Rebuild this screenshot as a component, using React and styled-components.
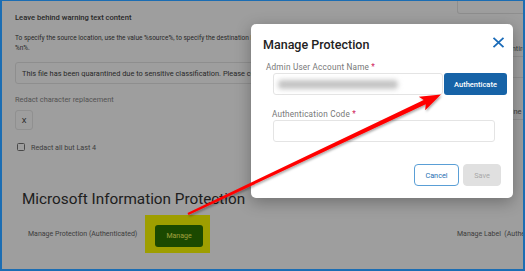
import styled, { createGlobalStyle } from "styled-components";

const GlobalStyle = createGlobalStyle`
  body {
    margin: 0;
    font-family: Roboto, "Liberation Sans", Arial, sans-serif;
  }
`;

const Frame = styled.div`
  position: relative;
  width: 525px;
  height: 271px;
  overflow: hidden;
  background: #fff;
  &::after {
    content: "";
    position: absolute;
    inset: 0;
    border: 2px solid #1b6db3;
    border-top-width: 1px;
    pointer-events: none;
    z-index: 5;
  }
`;

const Page = styled.div`
  padding-left: 15px;
  color: #444;
`;

const TopGrid = styled.div`
  display: grid;
  grid-template-columns: 430px 1fr;
  column-gap: 12px;
`;

const LeftCol = styled.div`
  padding-top: 12px;
  display: flex;
  flex-direction: column;
  align-items: flex-start;
`;

const SectionLabel = styled.div`
  font-size: 7.6px;
  font-weight: 500;
  line-height: 12px;
  color: #444;
`;

const Hint = styled.div`
  margin-top: 9px;
  font-size: 6.5px;
  line-height: 10px;
  color: #444;
  white-space: nowrap;
`;

const TextBox = styled.div`
  margin-top: 9px;
  width: 100%;
  height: 22px;
  box-sizing: border-box;
  border: 1px solid #e6e6e6;
  border-radius: 3px;
  padding-left: 6px;
  display: flex;
  align-items: center;
  font-size: 7.4px;
  color: #444;
  white-space: nowrap;
  overflow: hidden;
`;

const FieldCaption = styled.div`
  margin-top: 10px;
  font-size: 7.4px;
  line-height: 11px;
  color: #888;
`;

const CharBox = styled.div`
  margin-top: 5px;
  width: 18px;
  height: 20px;
  box-sizing: border-box;
  border: 1px solid #e8e8e8;
  border-radius: 3px;
  display: flex;
  align-items: center;
  justify-content: center;
  font-size: 7.5px;
  color: #333;
`;

const CheckRow = styled.label`
  margin-top: 12px;
  height: 10px;
  display: flex;
  align-items: center;
  gap: 6px;
  padding-left: 2px;
  font-size: 7.2px;
  color: #666;
`;

const CheckSquare = styled.span`
  width: 8px;
  height: 8px;
  box-sizing: border-box;
  border: 1px solid #777;
  border-radius: 1.5px;
`;

const RightCol = styled.div`
  display: flex;
  flex-direction: column;
`;

const RightBox = styled.div`
  height: 14px;
  box-sizing: border-box;
  border: 1px solid #e6e6e6;
  border-top: none;
  border-radius: 0 0 3px 3px;
  margin-bottom: 22px;
`;

const RightItem = styled.div`
  height: ${(p) => p.$h}px;
  box-sizing: border-box;
  border-bottom: 1px solid #e8e8e8;
  display: flex;
  align-items: flex-end;
  padding-bottom: 2px;
  font-size: 7.5px;
  line-height: 10px;
  color: #666;
  white-space: nowrap;
`;

const Heading = styled.h2`
  margin: 37px 0 0 7px;
  font-size: 15.3px;
  font-weight: 400;
  line-height: 20px;
  color: #333;
`;

const BottomGrid = styled.div`
  margin-top: 6px;
  display: grid;
  grid-template-columns: 442px 1fr;
`;

const ManageCell = styled.div`
  display: flex;
  align-items: center;
  padding-left: 13px;
`;

const RowLabel = styled.span`
  width: 117px;
  font-size: 7px;
  color: #666;
  white-space: nowrap;
`;

const Highlight = styled.div`
  padding: 8px 7px 6px 10px;
  background: #ffff00;
`;

const ManageButton = styled.button`
  width: 48px;
  height: 22px;
  border: none;
  border-radius: 3px;
  background: #2c7600;
  color: #ffff66;
  font-family: inherit;
  font-size: 7px;
  padding: 0;
`;

const SideCell = styled.div`
  display: flex;
  align-items: center;
  font-size: 7px;
  color: #666;
  white-space: nowrap;
`;

const Backdrop = styled.div`
  position: absolute;
  inset: 0;
  background: rgba(0, 0, 0, 0.38);
`;

const Dialog = styled.div`
  position: absolute;
  left: 251px;
  top: 24px;
  width: 262px;
  height: 174px;
  background: #fff;
  border-radius: 5px;
  box-shadow: 0 4px 16px rgba(0, 0, 0, 0.3);
  display: flex;
  flex-direction: column;
`;

const DialogHeader = styled.div`
  padding: 13px 8px 0 12px;
  display: flex;
  justify-content: space-between;
  align-items: flex-start;
`;

const DialogTitle = styled.h3`
  margin: 0;
  font-size: 12.5px;
  font-weight: 500;
  line-height: 16px;
  color: #222;
`;

const CloseButton = styled.button`
  border: none;
  background: none;
  padding: 0;
  width: 13px;
  height: 11px;
  display: flex;
`;

const DialogBody = styled.div`
  padding: 0 6px 0 22px;
  display: flex;
  flex-direction: column;
  align-items: flex-start;
`;

const FieldLabel = styled.div`
  margin: ${(p) => p.$top}px 0 1px ${(p) => p.$shift}px;
  font-size: 8.2px;
  line-height: 10px;
  letter-spacing: 0.2px;
  color: #777;
  span {
    color: #d0245a;
  }
`;

const InputRow = styled.div`
  display: flex;
  gap: 1px;
`;

const Input = styled.div`
  width: ${(p) => p.$w}px;
  height: 22px;
  box-sizing: border-box;
  border: 1px solid #e4e4e4;
  border-radius: 3px;
  display: flex;
  align-items: center;
  padding-left: 4px;
`;

const Blurred = styled.div`
  width: 120px;
  height: 9px;
  border-radius: 4px;
  background: #c4c4c4;
  filter: blur(2.5px);
`;

const PrimaryButton = styled.button`
  width: 63px;
  height: 22px;
  border: none;
  border-radius: 3px;
  background: #1663a7;
  color: #fff;
  font-family: inherit;
  font-size: 7.5px;
  font-weight: 500;
  padding: 0;
`;

const DialogFooter = styled.div`
  margin-top: 22px;
  padding: 0 12px;
  display: flex;
  justify-content: flex-end;
  gap: 4px;
`;

const FooterButton = styled.button`
  width: ${(p) => p.$w}px;
  height: 22px;
  box-sizing: border-box;
  border-radius: 4px;
  font-family: inherit;
  font-size: 7.3px;
  padding: 0;
  border: 1px solid ${(p) => (p.$outline ? "#5a9fd6" : "#e0e0e0")};
  background: ${(p) => (p.$outline ? "#fff" : "#e0e0e0")};
  color: ${(p) => (p.$outline ? "#1f6fb2" : "#a8a8a8")};
`;

const ArrowLayer = styled.svg`
  position: absolute;
  left: 0;
  top: 0;
  pointer-events: none;
  z-index: 4;
`;

export default function App() {
  return (
    <>
      <GlobalStyle />
      <Frame>
        <Page>
          <TopGrid>
            <LeftCol>
              <SectionLabel>Leave behind warning text content</SectionLabel>
              <Hint>
                To specify the source location, use the value %source%, to specify the destination
                location, use the value %destination%, to specify the file name, use the value
                <br />
                %n%.
              </Hint>
              <TextBox>
                This file has been quarantined due to sensitive classification. Please contact
                your administrator for more information.
              </TextBox>
              <FieldCaption>Redact character replacement</FieldCaption>
              <CharBox>X</CharBox>
              <CheckRow>
                <CheckSquare />
                Redact all but Last 4
              </CheckRow>
            </LeftCol>
            <RightCol>
              <RightBox />
              <RightItem $h={21}>Quarantine the entire file</RightItem>
              <RightItem $h={21}>On</RightItem>
              <RightItem $h={42}>Apply to quarantine folder</RightItem>
            </RightCol>
          </TopGrid>
          <Heading>Microsoft Information Protection</Heading>
          <BottomGrid>
            <ManageCell>
              <RowLabel>Manage Protection (Authenticated)</RowLabel>
              <Highlight>
                <ManageButton>Manage</ManageButton>
              </Highlight>
            </ManageCell>
            <SideCell>Manage Label&nbsp; (Authenticated)</SideCell>
          </BottomGrid>
        </Page>

        <Backdrop />
        <Dialog>
          <DialogHeader>
            <DialogTitle>Manage Protection</DialogTitle>
            <CloseButton aria-label="Close">
              <svg width="13" height="11" viewBox="0 0 13 11">
                <path
                  d="M1.5 0.8 L11.5 10.2 M11.5 0.8 L1.5 10.2"
                  stroke="#1a6bb8"
                  strokeWidth="1.8"
                  fill="none"
                />
              </svg>
            </CloseButton>
          </DialogHeader>
          <DialogBody>
            <FieldLabel $top={9} $shift={-7}>
              Admin User Account Name <span>*</span>
            </FieldLabel>
            <InputRow>
              <Input $w={170}>
                <Blurred />
              </Input>
              <PrimaryButton>Authenticate</PrimaryButton>
            </InputRow>
            <FieldLabel $top={14} $shift={-1}>
              Authentication Code <span>*</span>
            </FieldLabel>
            <Input $w={222} />
          </DialogBody>
          <DialogFooter>
            <FooterButton $outline $w={45}>
              Cancel
            </FooterButton>
            <FooterButton $w={38}>Save</FooterButton>
          </DialogFooter>
        </Dialog>

        <ArrowLayer width="525" height="271" viewBox="0 0 525 271">
          <defs>
            <filter id="arrowShadow" x="-10%" y="-10%" width="130%" height="130%">
              <feDropShadow dx="1" dy="1.5" stdDeviation="1" floodColor="#000" floodOpacity="0.35" />
            </filter>
          </defs>
          <polygon
            points="187.5,212.9 423.7,100.1 418.8,96.7 441,94.5 425.2,110.3 425.7,104.3 188.5,215.1"
            fill="#ff0000"
            filter="url(#arrowShadow)"
          />
        </ArrowLayer>
      </Frame>
    </>
  );
}
